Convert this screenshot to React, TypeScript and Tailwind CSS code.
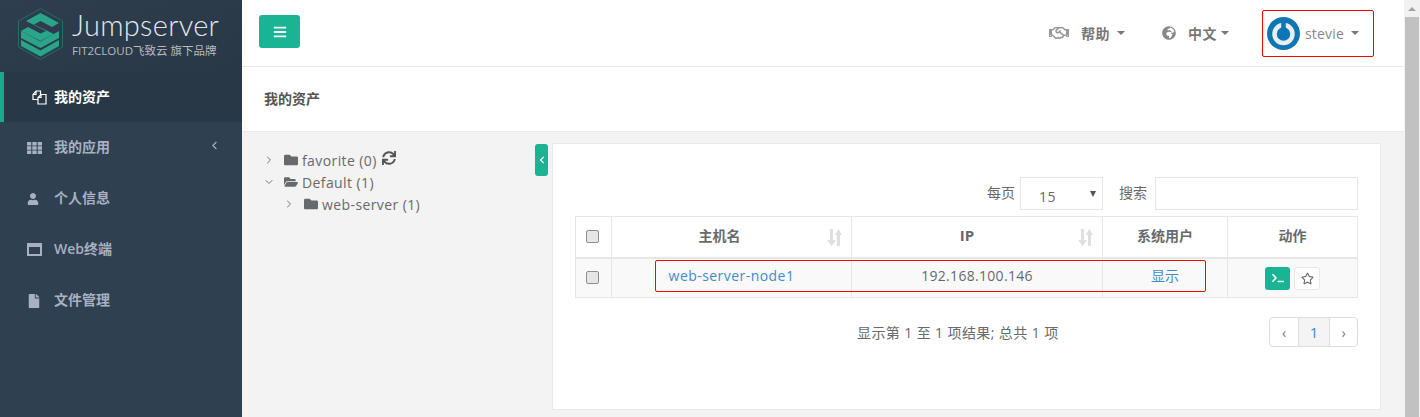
import React from 'react';
import { FaBars, FaUser, FaFile, FaRegHandshake, FaGlobeAfrica, FaFolder, FaFolderOpen, FaSync, FaRegStar, FaTerminal, FaChevronLeft } from 'react-icons/fa';
import { LuChevronRight, LuChevronDown, LuChevronLeft } from 'react-icons/lu';

const font = 'font-["Open_Sans","Noto_Sans_CJK_SC",sans-serif]';

const Caret = () => (
  <span className="inline-block w-0 h-0 border-x-[4.5px] border-x-transparent border-t-[4.5px] border-t-[#777]" />
);

const Logo = () => (
  <svg width="45" height="52" viewBox="0 0 45 52" className="shrink-0">
    <path d="M22.5 0.5 L44.5 13 V39 L22.5 51.5 L0.5 39 V13 Z" fill="none" stroke="#1f6f6b" strokeWidth="1" />
    <path d="M3 23 L22.5 33.5 L41 23 V30 L22.5 40 L3 30 Z" fill="#2aa58a" />
    <path d="M3 32 L22.5 42.5 L41 32 V38 L22.5 48.5 L3 38 Z" fill="#2aa58a" />
    <path d="M22.5 5 L41 15 L34 19 L22.5 13 L16 16.5 L36 26 L22.5 33 L3 23 L10 19 L22.5 25.5 L28 23 L8 13 Z" fill="#2aa58a" />
  </svg>
);

const SortIcon = () => (
  <svg width="15" height="17" viewBox="0 0 15 17" fill="#dfdfdf">
    <path d="M3 0H6V11H9L4.5 17L0 11H3Z" />
    <path d="M10 17H13V6H15L11.5 0L7.5 6H10Z" />
  </svg>
);

const Checkbox = () => (
  <span className="block w-[13px] h-[13px] rounded-[2px] border border-[#8f8f8f] bg-[#e6e6e6]" />
);

const NavItem = ({ icon, label, arrow }: { icon: React.ReactNode; label: string; arrow?: boolean }) => (
  <div className="h-[51px] flex items-center pl-[27px] pr-[21px] text-[#a7b1c2] text-[14px] font-semibold">
    <span className="w-[27px] flex text-[14px]">{icon}</span>
    <span className="mb-[2px]">{label}</span>
    {arrow && <LuChevronLeft className="ml-auto mb-[5px] text-[13px]" />}
  </div>
);

const TreeRow = ({ indent, open, folderOpen, label, extra }: { indent: string; open?: boolean; folderOpen?: boolean; label: string; extra?: React.ReactNode }) => (
  <div className={`h-[22px] flex items-center text-[14px] tracking-[0.4px] text-[#676a6c] ${indent}`}>
    <span className="w-[21px] flex text-[#777] text-[12px]">{open ? <LuChevronDown /> : <LuChevronRight />}</span>
    <span className="flex text-[14px] text-[#676a6c] w-[18px]">{folderOpen ? <FaFolderOpen /> : <FaFolder />}</span>
    <span>{label}</span>
    {extra}
  </div>
);

export default function App() {
  return (
    <div className={`flex h-[417px] w-[1420px] overflow-hidden bg-[#f3f3f4] ${font}`}>
      {/* sidebar */}
      <aside className="w-[242px] shrink-0 bg-[#2f4050]">
        <div className="h-[72px] bg-[linear-gradient(160deg,#2e3e4e,#293846)] flex items-start pl-[18px] pt-[8px] gap-[9px]">
          <Logo />
          <div className="text-[#e4e7ea]">
            <div className='font-["Lato",sans-serif] font-light text-[29px] leading-[34px] tracking-[0.3px]'>Jumpserver</div>
            <div className="text-[11.5px] leading-[16px] text-[#b5bcc4] mt-[1px] whitespace-nowrap">FIT2CLOUD飞致云 旗下品牌</div>
          </div>
        </div>
        <div className="h-[50px] bg-[#293846] border-l-4 border-[#19aa8d] flex items-center pl-[28px] text-white text-[14px] font-semibold">
          <span className="w-[22px] flex">
            <svg width="15" height="15" viewBox="0 0 15 15" fill="none" stroke="#fff" strokeWidth="1.2">
              <path d="M6 9.5H1V4.5L4 1H8.5V4.5" />
              <path d="M4 1V4.5H1" />
              <path d="M6 14V7.5L9 4.5H14V14Z" />
              <path d="M9 4.5V7.5H6" />
            </svg>
          </span>
          <span className="mb-[2px]">我的资产</span>
        </div>
        <NavItem
          icon={
            <svg width="15" height="12" viewBox="0 0 15 12" fill="#a7b1c2">
              <path d="M0 0H4.3V3.4H0ZM5.3 0H9.7V3.4H5.3ZM10.7 0H15V3.4H10.7ZM0 4.3H4.3V7.7H0ZM5.3 4.3H9.7V7.7H5.3ZM10.7 4.3H15V7.7H10.7ZM0 8.6H4.3V12H0ZM5.3 8.6H9.7V12H5.3ZM10.7 8.6H15V12H10.7Z" />
            </svg>
          }
          label="我的应用"
          arrow
        />
        <NavItem icon={<FaUser className="text-[12px]" />} label="个人信息" />
        <NavItem
          icon={
            <svg width="15" height="13" viewBox="0 0 15 13">
              <path fillRule="evenodd" d="M0 0H15V13H0Z M2 4V11H13V4Z" fill="#a7b1c2" />
            </svg>
          }
          label="Web终端"
        />
        <NavItem icon={<FaFile className="text-[14px]" />} label="文件管理" />
      </aside>

      {/* main */}
      <main className="flex-1 min-w-0 flex flex-col">
        <header className="h-[67px] shrink-0 bg-white border-b border-[#e7eaec] flex items-center pl-[17px] text-[#777]">
          <button className="w-[41px] h-[33px] mb-[3px] rounded-[3px] bg-[#1ab394] text-white flex items-center justify-center text-[14px]">
            <FaBars />
          </button>
          <div className="ml-auto flex items-center text-[14px] font-semibold h-full">
            <span className="text-[#999] text-[20px] flex mr-[12px]"><FaRegHandshake /></span>
            <span className="tracking-[0.5px]">帮助</span>
            <span className="ml-[7px] flex"><Caret /></span>
            <span className="ml-[37px] mr-[12px] text-[#888] text-[14px] flex"><FaGlobeAfrica /></span>
            <span className="tracking-[0.5px]">中文</span>
            <span className="ml-[4px] flex"><Caret /></span>
            <div className="ml-[33px] mr-[30px] w-[112px] h-[47px] border border-[#ff0000] rounded-[2px] flex items-center pl-[4px]">
              <svg width="33" height="33" viewBox="0 0 33 33" className="shrink-0">
                <circle cx="16.5" cy="16.5" r="16.5" fill="#0f76b5" />
                <circle cx="16.5" cy="17" r="9" fill="none" stroke="#e8eef2" strokeWidth="4.5" />
                <rect x="14.2" y="5" width="4.6" height="12" fill="#0f76b5" />
              </svg>
              <span className="ml-[5px] font-normal text-[14px] tracking-[0.2px] text-[#888]">stevie</span>
              <span className="ml-[7px] flex"><Caret /></span>
            </div>
          </div>
        </header>

        <div className="h-[65px] shrink-0 bg-white border-b border-[#e7eaec] flex items-center pl-[22px] pb-[2px] text-[14px] font-semibold text-[#555]">
          我的资产
        </div>

        <div className="flex-1 flex min-h-0 pt-[11px]">
          {/* asset tree */}
          <div className="w-[293px] shrink-0 pl-[21px] pt-[6px]">
            <TreeRow
              indent=""
              label="favorite (0)"
              extra={<span className="flex ml-[5px] mb-[4px] text-[14px] text-[#555]"><FaSync /></span>}
            />
            <TreeRow indent="" open folderOpen label="Default (1)" />
            <TreeRow indent="pl-[20px]" label="web-server (1)" />
          </div>
          <button className="w-[13px] h-[32px] mt-[1px] rounded-[3px] bg-[#1ab394] text-white flex items-center justify-center text-[8px] shrink-0">
            <FaChevronLeft />
          </button>

          {/* asset list */}
          <section className="w-[829px] ml-[4px] mb-[7px] bg-white border border-[#e7eaec] px-[22px] pt-[33px] text-[14px] text-[#676a6c]">
            <div className="flex items-center justify-end h-[33px]">
              <span className="mb-[3px]">每页</span>
              <div className="ml-[5px] w-[83px] h-[33px] border border-[#e5e6e7] flex pl-[18px] pr-[6px]">
                <span className="mt-[11px] leading-[16px] tracking-[0.5px]">15</span>
                <span className="ml-auto mt-[13px] w-0 h-0 border-x-[3.5px] border-x-transparent border-t-[6px] border-t-[#555]" />
              </div>
              <span className="ml-[16px] mb-[3px]">搜索</span>
              <div className="ml-[8px] w-[203px] h-[33px] border border-[#e5e6e7]" />
            </div>

            <div className="relative mt-[6px]">
              <table className="w-[782px] table-fixed border-collapse">
                <thead>
                  <tr className="h-[41px] text-[14px] text-[#676a6c]">
                    <th className="w-[36px] border border-[#e7e7e7] border-b-2 font-semibold">
                      <span className="flex justify-center pr-[2px]"><Checkbox /></span>
                    </th>
                    <th className="w-[240px] border border-[#e7e7e7] border-b-2 font-semibold relative pr-[24px] pb-[3px]">
                      主机名
                      <span className="absolute right-[9px] top-[12px]"><SortIcon /></span>
                    </th>
                    <th className="w-[251px] border border-[#e7e7e7] border-b-2 font-bold text-[15px] relative pr-[20px] pb-[3px]">
                      IP
                      <span className="absolute right-[9px] top-[12px]"><SortIcon /></span>
                    </th>
                    <th className="w-[125px] border border-[#e7e7e7] border-b-2 font-semibold pb-[3px]">系统用户</th>
                    <th className="w-[130px] border border-[#e7e7e7] border-b-2 font-semibold pb-[3px]">动作</th>
                  </tr>
                </thead>
                <tbody>
                  <tr className="h-[40px] bg-[#f9f9f9] text-center">
                    <td className="border border-[#e7e7e7]">
                      <span className="flex justify-center pr-[2px]"><Checkbox /></span>
                    </td>
                    <td className="border border-[#e7e7e7] text-[#428bca] tracking-[0.45px] pb-[4px]">web-server-node1</td>
                    <td className="border border-[#e7e7e7] tracking-[0.3px] pb-[4px]">192.168.100.146</td>
                    <td className="border border-[#e7e7e7] text-[#428bca] pb-[4px]">显示</td>
                    <td className="border border-[#e7e7e7]">
                      <span className="flex justify-center gap-[4px] mt-[1px]">
                        <span className="w-[25px] h-[23px] rounded-[3px] bg-[#1ab394] text-white flex items-center justify-center text-[12px]"><FaTerminal /></span>
                        <span className="w-[26px] h-[23px] rounded-[3px] bg-white border border-[#e7eaec] text-[#676a6c] flex items-center justify-center text-[13px]"><FaRegStar /></span>
                      </span>
                    </td>
                  </tr>
                </tbody>
              </table>
              {/* red annotation */}
              <div className="absolute left-[80px] top-[44px] w-[551px] h-[32px] border border-[#ff0000] rounded-[2px] pointer-events-none" />
            </div>

            <div className="flex items-center mt-[19px]">
              <span className="ml-[282px] tracking-[0.4px]">显示第 1 至 1 项结果; 总共 1 项</span>
              <div className="ml-auto flex h-[30px] w-[89px] border border-[#dddddd] rounded-[4px] text-center text-[#777]">
                <span className="w-[28px] flex items-center justify-center text-[14px]">‹</span>
                <span className="w-[32px] flex items-center justify-center bg-[#f4f4f4] border-x border-[#dddddd] text-[15px] text-[#428bca]">1</span>
                <span className="flex-1 flex items-center justify-center text-[14px]">›</span>
              </div>
            </div>
          </section>
        </div>
      </main>

      {/* browser scrollbar */}
      <div className="w-[16px] shrink-0 bg-[#f1f1f1] flex flex-col">
        <div className="h-[17px] flex items-center justify-center">
          <span className="w-0 h-0 border-x-[4px] border-x-transparent border-b-[4px] border-b-[#a3a3a3]" />
        </div>
        <div className="flex-1 mx-[1px] bg-[#c1c1c1]" />
      </div>
    </div>
  );
}
